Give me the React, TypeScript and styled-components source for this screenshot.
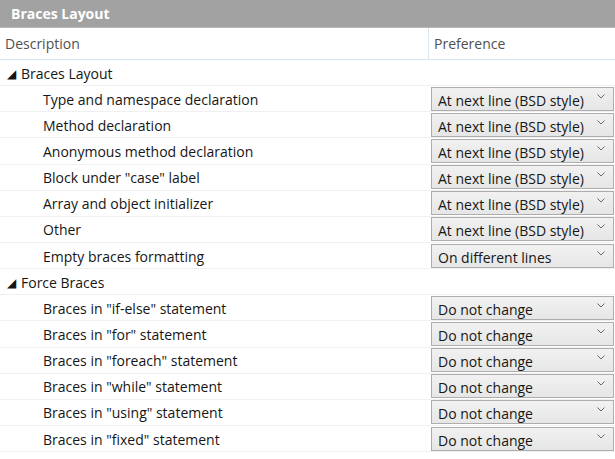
import React from "react";
import styled, { createGlobalStyle } from "styled-components";

const GlobalStyle = createGlobalStyle`
  html, body {
    margin: 0;
    padding: 0;
    background: #ffffff;
  }
  body {
    font-family: "Open Sans", "Noto Sans", "Liberation Sans", sans-serif;
    font-size: 14px;
    color: #161616;
  }
`;

const Panel = styled.div`
  width: 615px;
  display: flex;
  flex-direction: column;
`;

const TitleBar = styled.div`
  height: 27px;
  background: #a2a2a2;
  border-bottom: 1px solid #b8b8b8;
  color: #ffffff;
  font-weight: 700;
  font-size: 14px;
  line-height: 27px;
  padding-left: 11px;
`;

const Row = styled.div`
  display: grid;
  grid-template-columns: 428px 1fr;
  height: 26.15px;
  box-sizing: border-box;
  border-bottom: 1px solid #f0f0f0;
  align-items: center;
`;

const HeaderRow = styled(Row)`
  height: 32px;
  border-bottom: 1px solid #dae6ef;
  color: #505050;
`;

const HeaderCell = styled.div<{ $divider?: boolean }>`
  height: 100%;
  display: flex;
  align-items: center;
  padding-left: 5px;
  border-left: ${(p) => (p.$divider ? "1px solid #dae6ef" : "none")};
`;

const Label = styled.div<{ $indent: number }>`
  padding-left: ${(p) => p.$indent}px;
  padding-top: 1px;
  white-space: nowrap;
`;

const Arrow = styled.span`
  display: inline-block;
  width: 14px;
  font-size: 12px;
  vertical-align: 1px;
`;

const Select = styled.div`
  margin-left: 3px;
  width: 183px;
  height: 24px;
  box-sizing: border-box;
  border: 1px solid #adadad;
  background: linear-gradient(#f1f1f1, #e6e6e6);
  display: flex;
  align-items: flex-end;
  justify-content: space-between;
  padding: 0 8px 0 6px;
  overflow: hidden;
`;

const SelectText = styled.span`
  line-height: 18px;
  white-space: nowrap;
`;

const Chevron = styled.svg`
  align-self: flex-start;
  margin-top: 6px;
`;

type Setting = { label: string; value: string };
type Group = { title: string; items: Setting[] };

const BSD = "At next line (BSD style)";
const KEEP = "Do not change";

const groups: Group[] = [
  {
    title: "Braces Layout",
    items: [
      { label: "Type and namespace declaration", value: BSD },
      { label: "Method declaration", value: BSD },
      { label: "Anonymous method declaration", value: BSD },
      { label: 'Block under "case" label', value: BSD },
      { label: "Array and object initializer", value: BSD },
      { label: "Other", value: BSD },
      { label: "Empty braces formatting", value: "On different lines" },
    ],
  },
  {
    title: "Force Braces",
    items: [
      { label: 'Braces in "if-else" statement', value: KEEP },
      { label: 'Braces in "for" statement', value: KEEP },
      { label: 'Braces in "foreach" statement', value: KEEP },
      { label: 'Braces in "while" statement', value: KEEP },
      { label: 'Braces in "using" statement', value: KEEP },
      { label: 'Braces in "fixed" statement', value: KEEP },
    ],
  },
];

function Dropdown(props: { value: string }) {
  return (
    <Select>
      <SelectText>{props.value}</SelectText>
      <Chevron width="8" height="5" viewBox="0 0 8 5">
        <path d="M0.5 0.5 L4 4 L7.5 0.5" fill="none" stroke="#6a6a6a" strokeWidth="1" />
      </Chevron>
    </Select>
  );
}

export default function App() {
  return (
    <>
      <GlobalStyle />
      <Panel>
        <TitleBar>Braces Layout</TitleBar>
        <HeaderRow>
          <HeaderCell>Description</HeaderCell>
          <HeaderCell $divider>Preference</HeaderCell>
        </HeaderRow>
        {groups.map((group) => (
          <React.Fragment key={group.title}>
            <Row>
              <Label $indent={7}>
                <Arrow>◢</Arrow>
                {group.title}
              </Label>
              <div />
            </Row>
            {group.items.map((item) => (
              <Row key={item.label}>
                <Label $indent={43}>{item.label}</Label>
                <Dropdown value={item.value} />
              </Row>
            ))}
          </React.Fragment>
        ))}
      </Panel>
    </>
  );
}
